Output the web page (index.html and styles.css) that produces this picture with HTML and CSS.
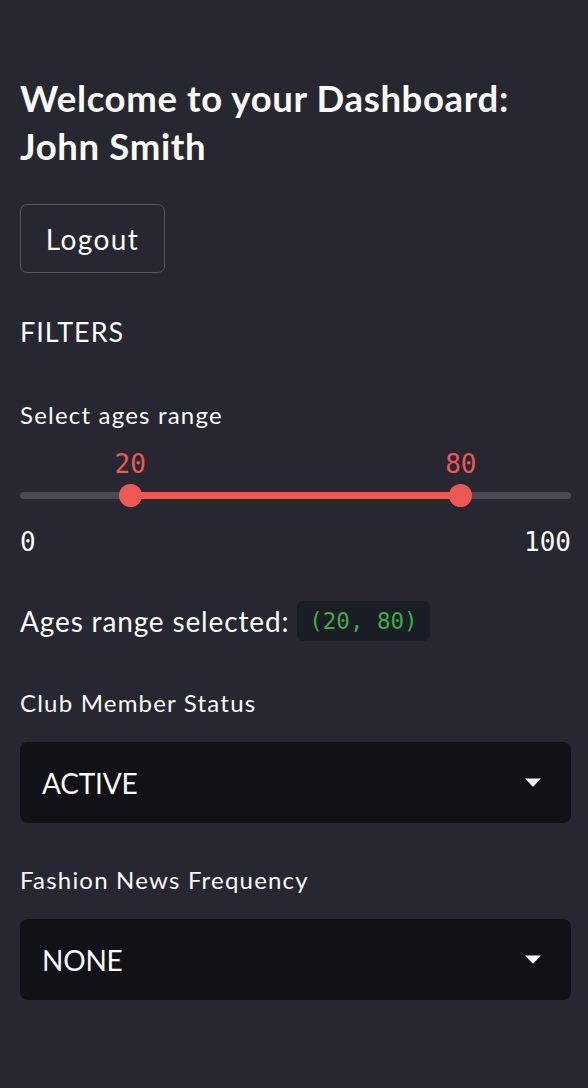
FILE: index.html
```html
<!DOCTYPE html>
<html lang="en">
<head>
<meta charset="utf-8">
<title>Dashboard</title>
<link rel="stylesheet" href="styles.css">
</head>
<body>
<aside class="sidebar">
  <h2 class="title">Welcome to your Dashboard:<br>John Smith</h2>
  <button class="btn" type="button">Logout</button>
  <p class="section">FILTERS</p>

  <div class="field">
    <label class="label">Select ages range</label>
    <div class="slider">
      <div class="track">
        <div class="fill" style="left: 20%; width: 60%;"></div>
        <div class="thumb" style="left: 20%;"><span class="val">20</span></div>
        <div class="thumb" style="left: 80%;"><span class="val">80</span></div>
      </div>
    </div>
    <div class="ticks"><span>0</span><span>100</span></div>
  </div>

  <div class="result">Ages range selected:<code class="code">(20, 80)</code></div>

  <div class="field">
    <label class="label">Club Member Status</label>
    <div class="select">
      <span>ACTIVE</span>
      <svg class="caret" width="18" height="9" viewBox="0 0 18 9"><path d="M1 0.5 H17 L9.6 8.2 Q9 8.8 8.4 8.2 Z" fill="#fafafa"/></svg>
    </div>
  </div>

  <div class="field field2">
    <label class="label">Fashion News Frequency</label>
    <div class="select">
      <span>NONE</span>
      <svg class="caret" width="18" height="9" viewBox="0 0 18 9"><path d="M1 0.5 H17 L9.6 8.2 Q9 8.8 8.4 8.2 Z" fill="#fafafa"/></svg>
    </div>
  </div>
</aside>
</body>
</html>
```

FILE: styles.css
```css
html, body {
  margin: 0;
  padding: 0;
  background: #262730;
}
body {
  font-family: Lato, "Open Sans", sans-serif;
  color: #fafafa;
}
.sidebar {
  padding: 74px 17px 40px 20px;
  min-height: 1088px;
  box-sizing: border-box;
}
.title {
  margin: 0;
  font-size: 36.5px;
  font-weight: 700;
  line-height: 48px;
  letter-spacing: 0.65px;
}
.btn {
  display: block;
  margin-top: 34px;
  height: 69px;
  width: 145px;
  padding: 0;
  background: #262730;
  border: 1.5px solid #55565f;
  border-radius: 7px;
  color: #fafafa;
  font-family: inherit;
  font-size: 28px;
  line-height: 40px;
  letter-spacing: 1.4px;
}
.section {
  margin: 39px 0 0;
  font-size: 27px;
  line-height: 40px;
  letter-spacing: 1px;
}
.field {
  margin-top: 45px;
}
.label {
  display: block;
  font-size: 24px;
  line-height: 35px;
  letter-spacing: 1.2px;
}
.slider {
  height: 88px;
  position: relative;
}
.track {
  position: absolute;
  left: 0;
  right: 0;
  top: 60px;
  height: 7px;
  border-radius: 4px;
  background: #4a4b55;
}
.fill {
  position: absolute;
  top: 0;
  bottom: 0;
  background: #ec5952;
}
.thumb {
  position: absolute;
  top: 50%;
  width: 23px;
  height: 23px;
  margin: -11.5px 0 0 -11.5px;
  border-radius: 50%;
  background: #ec5952;
}
.val {
  position: absolute;
  left: 50%;
  bottom: 28px;
  transform: translateX(-50%);
  font-family: "DejaVu Sans Mono", monospace;
  font-size: 26px;
  line-height: 30px;
  color: #ec5952;
}
.ticks {
  display: flex;
  justify-content: space-between;
  margin-top: 7px;
  font-family: "DejaVu Sans Mono", monospace;
  font-size: 26px;
  line-height: 30px;
}
.result {
  display: flex;
  align-items: center;
  margin-top: 44px;
  font-size: 28px;
  line-height: 40px;
  letter-spacing: 0.85px;
}
.code {
  margin-left: 8px;
  height: 40px;
  padding: 0 12px;
  display: inline-flex;
  align-items: center;
  background: #1b1d25;
  border-radius: 6px;
  color: #3fab48;
  font-family: "DejaVu Sans Mono", monospace;
  font-size: 22.5px;
  letter-spacing: 0;
}
.result + .field {
  margin-top: 44px;
}
.select {
  margin-top: 22px;
  height: 81px;
  box-sizing: border-box;
  display: flex;
  align-items: center;
  justify-content: space-between;
  padding: 0 29px 0 22px;
  background: #111217;
  border-radius: 8px;
  font-size: 28px;
  line-height: 40px;
  letter-spacing: -0.2px;
}
.field2 {
  margin-top: 39px;
}
.caret {
  display: block;
}
```
